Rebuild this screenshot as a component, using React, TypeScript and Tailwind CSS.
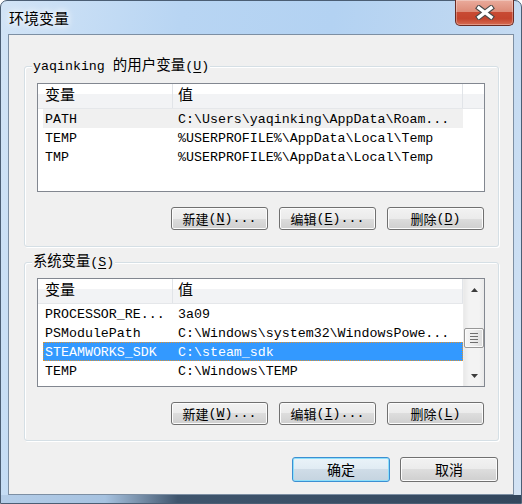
import React from "react";

type Row = [string, string];

const userRows: Row[] = [
  ["PATH", "C:\\Users\\yaqinking\\AppData\\Roam..."],
  ["TEMP", "%USERPROFILE%\\AppData\\Local\\Temp"],
  ["TMP", "%USERPROFILE%\\AppData\\Local\\Temp"],
];

const systemRows: Row[] = [
  ["PROCESSOR_RE...", "3a09"],
  ["PSModulePath", "C:\\Windows\\system32\\WindowsPowe..."],
  ["STEAMWORKS_SDK", "C:\\steam_sdk"],
  ["TEMP", "C:\\Windows\\TEMP"],
];

const mono = "font-['Liberation_Mono','Noto_Sans_CJK_SC',monospace]";

function Key({ k }: { k: string }) {
  return <u className="underline underline-offset-[2px]">{k}</u>;
}

function Header() {
  return (
    <div className="flex h-[25px] shrink-0 border-b border-[#e5e7ea] bg-[linear-gradient(#ffffff_0%,#ffffff_42%,#f2f3f5_42%,#f2f3f5_100%)] leading-[26px]">
      <div className="h-[24px] w-[135px] border-r border-[#e1e4e8] pl-[7px]">
        <span className="text-[15px]">变量</span>
      </div>
      <div className="h-[24px] w-[290px] border-r border-[#e1e4e8] pl-[5px]">
        <span className="text-[15px]">值</span>
      </div>
      <div className="flex-1" />
    </div>
  );
}

function Rows({ rows, hover, selected }: { rows: Row[]; hover?: number; selected?: number }) {
  return (
    <div className="flex flex-col">
      {rows.map(([name, value], i) => {
        let cls = "text-black";
        if (i === hover) cls = "bg-[#f0f0f0] text-black";
        if (i === selected)
          cls = "bg-[#3399ff] text-white outline-1 outline-dotted outline-[#e0922e] -outline-offset-1";
        return (
          <div key={i} className={`ml-[5px] flex h-[19px] w-[420px] shrink-0 whitespace-nowrap leading-[22px] ${cls}`}>
            <div className="h-[19px] w-[130px] pl-[2px]">{name}</div>
            <div className="h-[19px] pl-[5px]">{value}</div>
          </div>
        );
      })}
    </div>
  );
}

function Arrow({ up }: { up?: boolean }) {
  return (
    <div className="flex h-[21px] shrink-0 items-center justify-center">
      <svg width="7" height="4" viewBox="0 0 7 4">
        <path d={up ? "M0 4 L3.5 0 L7 4 Z" : "M0 0 L3.5 4 L7 0 Z"} fill="#3c3c3c" />
      </svg>
    </div>
  );
}

function ScrollBar() {
  return (
    <div className="flex w-[21px] shrink-0 flex-col border-l border-[#ececec] bg-[linear-gradient(to_right,#e9e9e9,#f3f3f3_25%,#f3f3f3_75%,#eaeaea)]">
      <Arrow up />
      <div className="flex-1">
        <div className="mt-[28px] flex h-[20px] w-[20px] flex-col items-center justify-center gap-[2px] rounded-[2px] border border-[#979797] bg-[linear-gradient(to_right,#f6f6f6,#ececec_50%,#dcdcdc)] shadow-[inset_0_0_0_1px_#fbfbfb]">
          <div className="h-px w-[8px] bg-[#6e6e6e]" />
          <div className="h-px w-[8px] bg-[#6e6e6e]" />
          <div className="h-px w-[8px] bg-[#6e6e6e]" />
          <div className="h-px w-[8px] bg-[#6e6e6e]" />
        </div>
      </div>
      <Arrow />
    </div>
  );
}

function Btn({ children }: { children: React.ReactNode }) {
  return (
    <div className="flex h-[23px] w-[97px] items-center justify-center rounded-[3px] border border-[#707070] bg-[linear-gradient(#f2f2f2_0%,#ebebeb_50%,#dddddd_50%,#cfcfcf_100%)] shadow-[inset_0_0_0_1px_#fcfcfc] leading-[20px] text-black">
      {children}
    </div>
  );
}

function Cjk({ t }: { t: string }) {
  return <span className="font-['Noto_Sans_CJK_SC',sans-serif] text-[13px]">{t}</span>;
}

function Group({
  title,
  h,
  pt,
  children,
  buttons,
}: {
  title: React.ReactNode;
  h: string;
  pt: string;
  children: React.ReactNode;
  buttons: React.ReactNode;
}) {
  return (
    <div className={`relative flex w-[475px] flex-col rounded-[3px] border border-[#d5dfe5] pl-[12px] shadow-[1px_1px_0_#ffffff,inset_1px_1px_0_#ffffff] ${h} ${pt}`}>
      <div className="absolute -top-[9px] left-[7px] bg-[#f0f0f0] px-px leading-[16px] whitespace-nowrap">{title}</div>
      {children}
      <div className="mt-[15px] flex justify-end gap-[11px] pr-[14px]">{buttons}</div>
    </div>
  );
}

export default function App() {
  return (
    <div className={`h-[504px] w-[522px] bg-white text-[13.3px] text-black ${mono}`}>
      <div className="flex h-[504px] w-[522px] flex-col rounded-t-[7px] border border-[#4b5e74] bg-[linear-gradient(100deg,#d2e4f6_0%,#b8d5f3_30%,#b3d2f2_55%,#c0d8f1_80%,#d3e3f4_100%)]">
        <div className="flex h-[33px] shrink-0 items-start justify-between pl-[8px] pr-[7px]">
          <span className="mt-[7px] font-['Noto_Sans_CJK_SC',sans-serif] text-[15px] leading-[20px] text-black [text-shadow:0_0_6px_#ffffff,0_0_10px_#ffffff]">
            环境变量
          </span>
          <div className="-mt-px flex h-[26px] w-[59px] items-center justify-center rounded-b-[5px] border border-t-0 border-[#6b2b22] bg-[linear-gradient(#eaab9c_0%,#dd8c79_46%,#c84a33_50%,#c4442d_75%,#d66c52_100%)] shadow-[inset_0_0_0_1px_rgba(255,255,255,0.3)]">
            <svg width="20" height="15" viewBox="0 0 20 15">
              <path d="M4 3 L16 12 M16 3 L4 12" stroke="#4a4a4a" strokeWidth="5.6" strokeLinecap="square" />
              <path d="M4 3 L16 12 M16 3 L4 12" stroke="#ffffff" strokeWidth="3.4" strokeLinecap="square" />
            </svg>
          </div>
        </div>

        <div className="mx-[7px] flex h-[461px] shrink-0 flex-col border border-[#7d8fa3] bg-[#f0f0f0] pt-[31px] pl-[15px] pr-[14px]">
          <Group
            h="h-[181px]"
            pt="pt-[16px]"
            title={
              <>
                yaqinking <span className="text-[14.5px]">的用户变量</span>(<Key k="U" />)
              </>
            }
            buttons={
              <>
                <Btn>
                  <Cjk t="新建" />(<Key k="N" />)...
                </Btn>
                <Btn>
                  <Cjk t="编辑" />(<Key k="E" />)...
                </Btn>
                <Btn>
                  <Cjk t="删除" />(<Key k="D" />)
                </Btn>
              </>
            }
          >
            <div className="flex h-[109px] w-[448px] flex-col overflow-hidden border border-[#828790] bg-white">
              <Header />
              <Rows rows={userRows} hover={0} />
            </div>
          </Group>

          <div className="mt-[15px]">
            <Group
              h="h-[179px]"
              pt="pt-[15px]"
              title={
                <>
                  <span className="text-[14.3px]">系统变量</span>(<Key k="S" />)
                </>
              }
              buttons={
                <>
                  <Btn>
                    <Cjk t="新建" />(<Key k="W" />)...
                  </Btn>
                  <Btn>
                    <Cjk t="编辑" />(<Key k="I" />)...
                  </Btn>
                  <Btn>
                    <Cjk t="删除" />(<Key k="L" />)
                  </Btn>
                </>
              }
            >
              <div className="flex h-[109px] w-[448px] overflow-hidden border border-[#828790] bg-white">
                <div className="flex flex-1 flex-col overflow-hidden">
                  <Header />
                  <Rows rows={systemRows} selected={2} />
                </div>
                <ScrollBar />
              </div>
            </Group>
          </div>

          <div className="mt-[16px] flex justify-end gap-[10px] pr-px font-['Noto_Sans_CJK_SC',sans-serif] text-[14px]">
            <div className="flex h-[25px] w-[98px] items-center justify-center rounded-[3px] border border-[#3c8fd2] bg-[linear-gradient(#eaf3f9_0%,#e0ebf3_50%,#cfdce7_50%,#c5d4e0_100%)] shadow-[inset_0_0_0_1px_#8ddffa]">
              确定
            </div>
            <div className="flex h-[25px] w-[98px] items-center justify-center rounded-[3px] border border-[#707070] bg-[linear-gradient(#f2f2f2_0%,#ebebeb_50%,#dddddd_50%,#cfcfcf_100%)] shadow-[inset_0_0_0_1px_#fcfcfc]">
              取消
            </div>
          </div>
        </div>

        <div className="flex-1 bg-[linear-gradient(to_right,#b4cde8_0%,#a6c2e0_20%,#7d95af_26%,#3f556d_34%,#33475d_100%)]" />
      </div>
    </div>
  );
}
